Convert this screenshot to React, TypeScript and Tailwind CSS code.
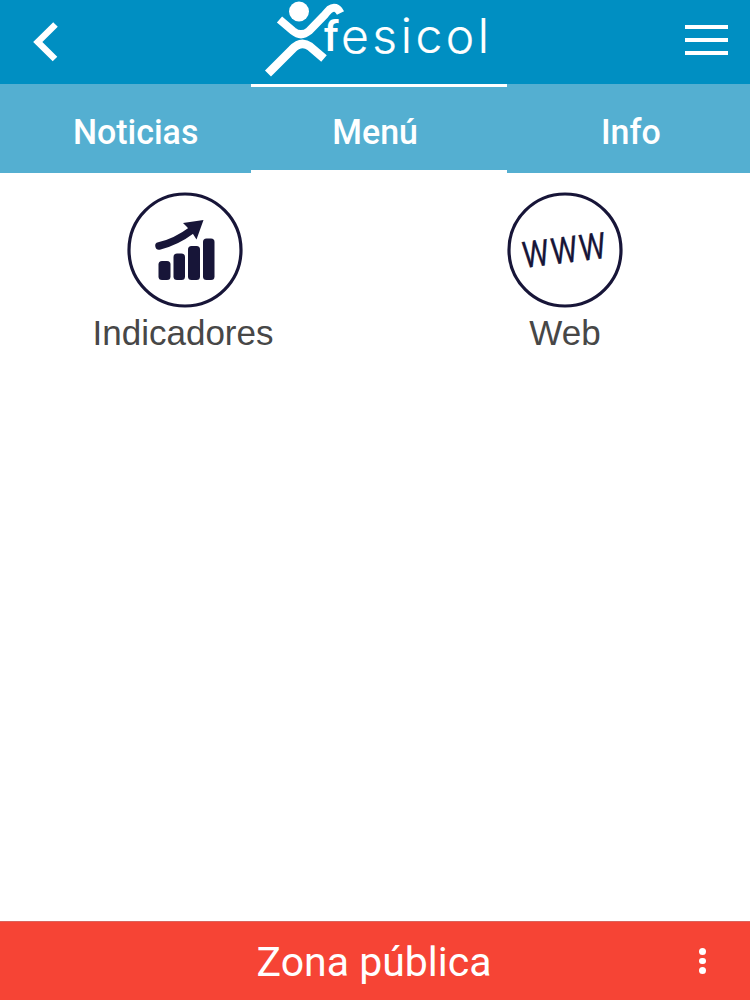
import React from 'react';

const Logo = () => (
  <svg width="230" height="84" viewBox="262 0 230 84" className="text-white" fill="currentColor">
    {/* Runner */}
    <circle cx="299" cy="11.5" r="10" />
    <path
      d="M279.500 19.500L293 31Q301 37.500 309 31L325 14.500Q327 12 329.500 9.500Q336 4.500 340.500 13"
      fill="none"
      stroke="currentColor"
      strokeWidth="8"
    />
    <path
      d="M268 73.500L292 49.500Q301 40 310 46.500L324 58.500"
      fill="none"
      stroke="currentColor"
      strokeWidth="8.500"
    />
    <text x="323.5" y="51" fontSize="42" fontWeight="500" fontFamily="Roboto, sans-serif" textLength="15" lengthAdjust="spacingAndGlyphs">
      f
    </text>
    <text x="341" y="52.500" fontSize="48" fontWeight="300" fontFamily="Inter, sans-serif" stroke="currentColor" strokeWidth="0.2" textLength="148" lengthAdjust="spacing">
      esicol
    </text>
  </svg>
);

const ChartIcon = () => (
  <svg width="116" height="116" viewBox="0 0 116 116" fill="#171538">
    <circle cx="58" cy="58" r="56" fill="none" stroke="#171538" strokeWidth="3.200" />
    <rect x="31.500" y="69" width="12" height="19" rx="3.500" />
    <rect x="46.500" y="61.500" width="11.500" height="26.500" rx="3.500" />
    <rect x="61" y="54" width="12" height="34" rx="3.500" />
    <rect x="76" y="46.500" width="11.500" height="41.500" rx="3.500" />
    <path d="M32 54Q49 50 65 38" fill="none" stroke="#171538" strokeWidth="7.500" strokeLinecap="round" />
    <path d="M56 31L76.500 28L69.500 47.500L66 42L60 35Z" />
  </svg>
);

const WebIcon = () => (
  <svg width="116" height="116" viewBox="0 0 116 116" fill="#171538">
    <circle cx="58" cy="58" r="56" fill="none" stroke="#171538" strokeWidth="3.200" />
    <text
      fontSize="36.5"
      fontFamily="Roboto, sans-serif"
      letterSpacing="2.500"
      stroke="#171538"
      strokeWidth="0.3"
      transform="translate(17 76) rotate(-7) scale(0.82 1)"
    >
      WWW
    </text>
  </svg>
);

const App = () => {
  return (
    <div className="flex h-[1000px] w-[750px] flex-col overflow-hidden bg-white font-['Roboto',sans-serif]">
      {/* Header */}
      <header className="flex h-[84px] shrink-0 items-start justify-between bg-[#008fc2] text-white">
        <button className="flex h-[84px] w-[262px] items-center pl-[33px]" aria-label="Volver">
          <svg width="26" height="42" viewBox="0 0 26 42" fill="none" stroke="currentColor" strokeWidth="6.500">
            <path d="M22.500 3.500L4.800 21L22 38" />
          </svg>
        </button>
        <Logo />
        <button className="flex h-[84px] flex-1 flex-col items-end gap-[9px] pt-[25px] pr-[22px]" aria-label="Abrir">
          <span className="h-[4px] w-[43px] bg-white" />
          <span className="h-[4px] w-[43px] bg-white" />
          <span className="h-[4px] w-[43px] bg-white" />
        </button>
      </header>

      {/* Tabs */}
      <nav className="flex h-[89px] shrink-0 bg-[#54afd1] text-[35px] font-medium leading-none text-white">
        <button className="flex w-[251px] items-center justify-center pt-[7px] pl-5">
          <span className="inline-block scale-x-[0.97]">Noticias</span>
        </button>
        <button className="flex w-[256px] items-center justify-center border-y-[3px] border-white pt-[7px] pr-[7px]">
          <span className="inline-block scale-x-[0.97]">Menú</span>
        </button>
        <button className="flex flex-1 items-center justify-center pt-[7px] pl-1">
          <span className="inline-block scale-x-[0.97]">Info</span>
        </button>
      </nav>

      {/* Menu */}
      <main className="flex flex-1 items-start pt-[19px] font-['Liberation_Sans',sans-serif] text-[35px] leading-none text-[#474747]">
        <div className="flex w-[370px] shrink-0 flex-col items-center">
          <ChartIcon />
          <span className="mt-[7px] mr-1">Indicadores</span>
        </div>
        <div className="flex w-[390px] shrink-0 flex-col items-center">
          <WebIcon />
          <span className="mt-[7px]">Web</span>
        </div>
      </main>

      {/* Footer */}
      <footer className="flex h-[79px] shrink-0 items-center border-t border-[#d9645c] bg-[#f64435] text-white">
        <div className="w-[93px]" />
        <span className="flex-1 pt-[3px] text-center text-[41px] leading-none">Zona pública</span>
        <button className="flex w-[95px] flex-col items-center gap-[3px]" aria-label="Opciones">
          <span className="size-[6.5px] rounded-full bg-white" />
          <span className="size-[6.5px] rounded-full bg-white" />
          <span className="size-[6.5px] rounded-full bg-white" />
        </button>
      </footer>
    </div>
  );
};

export default App;
